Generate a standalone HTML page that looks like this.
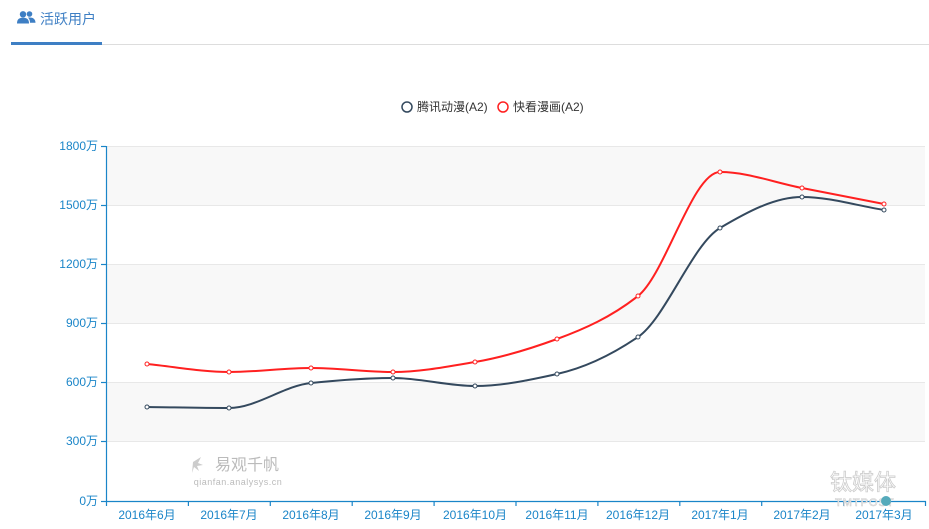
<!DOCTYPE html>
<html><head><meta charset="utf-8"><style>
body{margin:0;width:929px;height:529px;background:#fff;font-family:"Liberation Sans","Noto Sans CJK SC",sans-serif;overflow:hidden;position:relative}
.tab{position:absolute;left:11px;top:0;width:91px;height:45px;border-bottom:3px solid #3e7fc4;box-sizing:border-box}
.tab span{position:absolute;left:29px;top:9px;font-size:14px;color:#3e7fc4}
.line{position:absolute;left:102px;right:0;top:44px;height:1px;background:#ddd}
</style></head><body>
<div class="tab"><svg style="position:absolute;left:6px;top:11px" width="19" height="13" viewBox="0 0 19 13"><circle cx="6" cy="3.3" r="3.2" fill="#3e7fc4"/><path d="M0 12.5C0 8 2.5 6.8 6 6.8S12 8 12 12.5Z" fill="#3e7fc4"/><circle cx="12.5" cy="3" r="2.8" fill="#3e7fc4"/><path d="M11 6.6C15 6 18.5 7.3 18.5 11.8H13C13 9.5 12.5 8 11 6.6Z" fill="#3e7fc4"/></svg><span>活跃用户</span></div>
<div class="line"></div>
<svg id="c" width="929" height="529" style="position:absolute;left:0;top:0" font-family="Liberation Sans, Noto Sans CJK SC, sans-serif">
<rect x="107" y="146" width="818" height="59" fill="#f8f8f8"/>
<rect x="107" y="264" width="818" height="59" fill="#f8f8f8"/>
<rect x="107" y="382" width="818" height="59" fill="#f8f8f8"/>
<g stroke="#e8e8e8" stroke-width="1">
<line x1="107" y1="146.5" x2="925" y2="146.5"/><line x1="107" y1="205.5" x2="925" y2="205.5"/><line x1="107" y1="264.5" x2="925" y2="264.5"/><line x1="107" y1="323.5" x2="925" y2="323.5"/><line x1="107" y1="382.5" x2="925" y2="382.5"/><line x1="107" y1="441.5" x2="925" y2="441.5"/></g>
<g stroke="#1a85c8" stroke-width="1.2" fill="none">
<line x1="106.5" y1="146" x2="106.5" y2="501"/><line x1="106" y1="501.5" x2="926" y2="501.5"/>
<line x1="101" y1="146.5" x2="106" y2="146.5"/><line x1="101" y1="205.5" x2="106" y2="205.5"/><line x1="101" y1="264.5" x2="106" y2="264.5"/><line x1="101" y1="323.5" x2="106" y2="323.5"/><line x1="101" y1="382.5" x2="106" y2="382.5"/><line x1="101" y1="441.5" x2="106" y2="441.5"/><line x1="101" y1="501.5" x2="106" y2="501.5"/>
</g>
<g id="xt" stroke="#1a85c8" stroke-width="1.2"></g>
<g fill="#1a85c8" font-size="12" text-anchor="end">
<text x="98" y="150">1800万</text><text x="98" y="209">1500万</text><text x="98" y="268">1200万</text><text x="98" y="327">900万</text><text x="98" y="386">600万</text><text x="98" y="445">300万</text><text x="98" y="505">0万</text></g>
<g id="xl" fill="#1a85c8" font-size="12" text-anchor="middle"></g>
<g fill="#bbb"><text x="215" y="470" font-size="16">易观千帆</text><text x="238" y="485" font-size="9" text-anchor="middle" letter-spacing="0.5">qianfan.analysys.cn</text>
<path d="M193 462l8-5-3 6 5 2-6 1 2 5-5-4-2 6z" fill="#ccc"/></g>
<g fill="none" stroke="#ddd" stroke-width="1.2"><text x="830" y="490" font-size="22" fill="#fff" stroke="#ccc" stroke-width="0.8">钛媒体</text><text x="835" y="506" font-size="11" fill="#fff" stroke="#ccc" stroke-width="0.6" letter-spacing="1">TMTPOST</text></g>
<circle cx="886" cy="501" r="5" fill="#5ab"/>
<g fill="#333" font-size="12"><circle cx="407" cy="107" r="5" fill="none" stroke="#34495e" stroke-width="1.5"/><text x="417" y="111">腾讯动漫(A2)</text>
<circle cx="503" cy="107" r="5" fill="none" stroke="#ff2020" stroke-width="1.5"/><text x="513" y="111">快看漫画(A2)</text></g>
<g id="ln"></g>
</svg>
<script>
var xs=[147,229,311,393,475,557,638,720,802,884];
var labels=["2016年6月","2016年7月","2016年8月","2016年9月","2016年10月","2016年11月","2016年12月","2017年1月","2017年2月","2017年3月"];
var ns="http://www.w3.org/2000/svg",xt=document.getElementById('xt'),xl=document.getElementById('xl');
for(var i=0;i<=10;i++){var l=document.createElementNS(ns,'line');var x=106.5+i*81.9;l.setAttribute('x1',x);l.setAttribute('x2',x);l.setAttribute('y1',501);l.setAttribute('y2',506);xt.appendChild(l);}
labels.forEach(function(t,i){var e=document.createElementNS(ns,'text');e.setAttribute('x',xs[i]);e.setAttribute('y',519);e.textContent=t;xl.appendChild(e);});
function path(ys){var n=xs.length,s=[],m=[];
for(var i=0;i<n-1;i++)s.push((ys[i+1]-ys[i])/(xs[i+1]-xs[i]));
m[0]=s[0];m[n-1]=s[n-2];
for(var i=1;i<n-1;i++){if(s[i-1]*s[i]<=0)m[i]=0;else m[i]=2/(1/s[i-1]+1/s[i]);}
var d='M'+xs[0]+' '+ys[0];
for(var i=0;i<n-1;i++){var h=(xs[i+1]-xs[i])/3;
d+=' C'+(xs[i]+h)+' '+(ys[i]+m[i]*h)+' '+(xs[i+1]-h)+' '+(ys[i+1]-m[i+1]*h)+' '+xs[i+1]+' '+ys[i+1];}
return d;}
var g=document.getElementById('ln');
function draw(ys,col){var p=document.createElementNS(ns,'path');p.setAttribute('d',path(ys));p.setAttribute('fill','none');p.setAttribute('stroke',col);p.setAttribute('stroke-width','2');g.appendChild(p);
ys.forEach(function(y,i){var c=document.createElementNS(ns,'circle');c.setAttribute('cx',xs[i]);c.setAttribute('cy',y);c.setAttribute('r',2);c.setAttribute('fill','#fff');c.setAttribute('stroke',col);c.setAttribute('stroke-width','1');g.appendChild(c);});}
draw([407,408,383,378,386,374,337,228,197,210],'#34495e');
draw([364,372,368,372,362,339,296,172,188,204],'#ff2020');
</script>
</body></html>
